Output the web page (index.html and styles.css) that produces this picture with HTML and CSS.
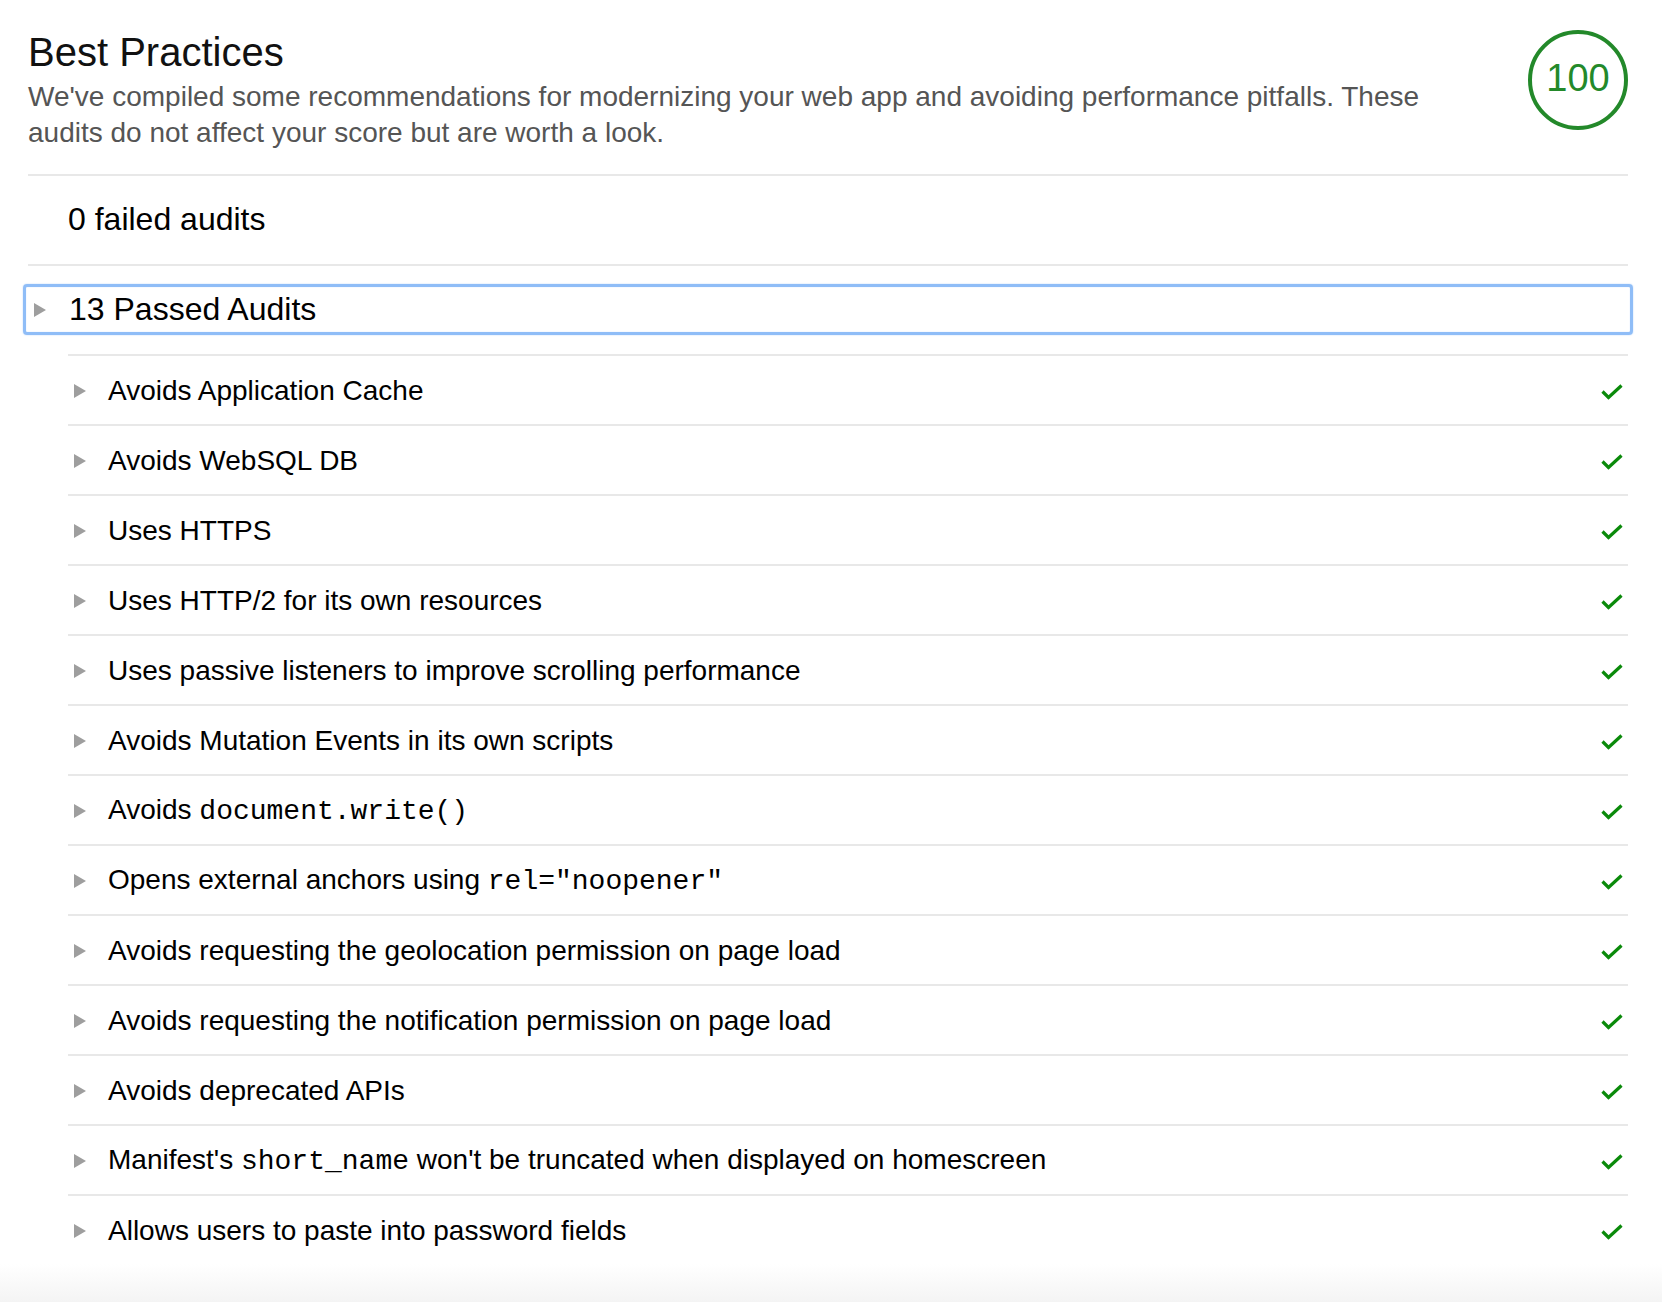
FILE: index.html
```html
<!DOCTYPE html>
<html lang="en">
<head>
<meta charset="utf-8">
<title>Best Practices</title>
<link rel="stylesheet" href="styles.css">
</head>
<body>
<section class="category">
  <header class="cat-header">
    <div class="cat-text">
      <h1 class="cat-title">Best Practices</h1>
      <p class="cat-desc">We've compiled some recommendations for modernizing your web app and avoiding performance pitfalls. These audits do not affect your score but are worth a look.</p>
    </div>
    <div class="score">100</div>
  </header>
  <div class="failed">0 failed audits</div>
  <div class="passed-summary"><span class="arrow"></span><span class="passed-title">13 Passed Audits</span></div>
  <ul class="audits">
    <li class="audit"><span class="arrow"></span><span class="audit-title">Avoids Application Cache</span><svg class="check" viewBox="0 0 22 16"><polyline points="1.5,7.5 7.5,13.5 20.5,1.5"/></svg></li>
    <li class="audit"><span class="arrow"></span><span class="audit-title">Avoids WebSQL DB</span><svg class="check" viewBox="0 0 22 16"><polyline points="1.5,7.5 7.5,13.5 20.5,1.5"/></svg></li>
    <li class="audit"><span class="arrow"></span><span class="audit-title">Uses HTTPS</span><svg class="check" viewBox="0 0 22 16"><polyline points="1.5,7.5 7.5,13.5 20.5,1.5"/></svg></li>
    <li class="audit"><span class="arrow"></span><span class="audit-title">Uses HTTP/2 for its own resources</span><svg class="check" viewBox="0 0 22 16"><polyline points="1.5,7.5 7.5,13.5 20.5,1.5"/></svg></li>
    <li class="audit"><span class="arrow"></span><span class="audit-title">Uses passive listeners to improve scrolling performance</span><svg class="check" viewBox="0 0 22 16"><polyline points="1.5,7.5 7.5,13.5 20.5,1.5"/></svg></li>
    <li class="audit"><span class="arrow"></span><span class="audit-title">Avoids Mutation Events in its own scripts</span><svg class="check" viewBox="0 0 22 16"><polyline points="1.5,7.5 7.5,13.5 20.5,1.5"/></svg></li>
    <li class="audit"><span class="arrow"></span><span class="audit-title">Avoids <code>document.write()</code></span><svg class="check" viewBox="0 0 22 16"><polyline points="1.5,7.5 7.5,13.5 20.5,1.5"/></svg></li>
    <li class="audit"><span class="arrow"></span><span class="audit-title">Opens external anchors using <code>rel="noopener"</code></span><svg class="check" viewBox="0 0 22 16"><polyline points="1.5,7.5 7.5,13.5 20.5,1.5"/></svg></li>
    <li class="audit"><span class="arrow"></span><span class="audit-title">Avoids requesting the geolocation permission on page load</span><svg class="check" viewBox="0 0 22 16"><polyline points="1.5,7.5 7.5,13.5 20.5,1.5"/></svg></li>
    <li class="audit"><span class="arrow"></span><span class="audit-title">Avoids requesting the notification permission on page load</span><svg class="check" viewBox="0 0 22 16"><polyline points="1.5,7.5 7.5,13.5 20.5,1.5"/></svg></li>
    <li class="audit"><span class="arrow"></span><span class="audit-title">Avoids deprecated APIs</span><svg class="check" viewBox="0 0 22 16"><polyline points="1.5,7.5 7.5,13.5 20.5,1.5"/></svg></li>
    <li class="audit"><span class="arrow"></span><span class="audit-title">Manifest's <code>short_name</code> won't be truncated when displayed on homescreen</span><svg class="check" viewBox="0 0 22 16"><polyline points="1.5,7.5 7.5,13.5 20.5,1.5"/></svg></li>
    <li class="audit"><span class="arrow"></span><span class="audit-title">Allows users to paste into password fields</span><svg class="check" viewBox="0 0 22 16"><polyline points="1.5,7.5 7.5,13.5 20.5,1.5"/></svg></li>
  </ul>
</section>
<div class="page-fade"></div>
</body>
</html>
```

FILE: styles.css
```css
html, body {
  margin: 0;
  padding: 0;
  background: #fff;
}

body {
  font-family: "Liberation Sans", Arial, Helvetica, sans-serif;
  color: #000;
}

.category {
  padding: 0 34px 0 28px;
}

.cat-header {
  display: flex;
  align-items: flex-start;
  padding: 28px 0 23px;
  border-bottom: 2px solid #e8e8e8;
}

.cat-text {
  flex: 1;
  padding-right: 70px;
}

.cat-title {
  margin: 0;
  font-size: 40px;
  line-height: 48px;
  font-weight: normal;
  color: #111;
}

.cat-desc {
  margin: 3px 0 0;
  font-size: 28px;
  line-height: 36px;
  color: #555;
}

.score {
  flex: none;
  box-sizing: border-box;
  width: 100px;
  height: 100px;
  margin-top: 2px;
  padding-bottom: 3px;
  border: 4px solid #23892a;
  border-radius: 50%;
  display: flex;
  align-items: center;
  justify-content: center;
  font-size: 38px;
  color: #23892a;
}

.failed {
  padding: 23px 0 25px 40px;
  font-size: 32px;
  line-height: 40px;
  border-bottom: 2px solid #e8e8e8;
}

.passed-summary {
  display: flex;
  align-items: center;
  margin: 18px -5px 0;
  box-sizing: border-box;
  height: 51px;
  padding-bottom: 2px;
  border: 3px solid #8fbdf7;
  border-radius: 4px;
  box-shadow: 0 0 1.5px #a8cbf8, inset 0 0 1px #a8cbf8;
  font-size: 32px;
  line-height: 40px;
}

.passed-summary .arrow {
  margin: 2px 23px 0 8px;
}

.arrow {
  flex: none;
  width: 0;
  height: 0;
  border-top: 7px solid transparent;
  border-bottom: 7px solid transparent;
  border-left: 12px solid #9e9e9e;
}

.audits {
  list-style: none;
  margin: 19px 0 0 40px;
  padding: 0;
}

.audit {
  display: flex;
  align-items: center;
  height: 67px;
  padding-top: 1px;
  border-top: 2px solid #e8e8e8;
  font-size: 28px;
  line-height: 36px;
}

.audit .arrow {
  margin: 0 22px 0 6px;
}

.audit-title {
  flex: 1;
}

code {
  font-family: "Liberation Mono", "Courier New", monospace;
  font-size: 28px;
}

.check {
  flex: none;
  width: 22px;
  height: 16px;
  margin: 3px 5px 0 0;
  fill: none;
  stroke: #0a8a0a;
  stroke-width: 3.2;
}

.page-fade {
  height: 38px;
  background: linear-gradient(to bottom, #fff, #f4f4f4);
}
```
